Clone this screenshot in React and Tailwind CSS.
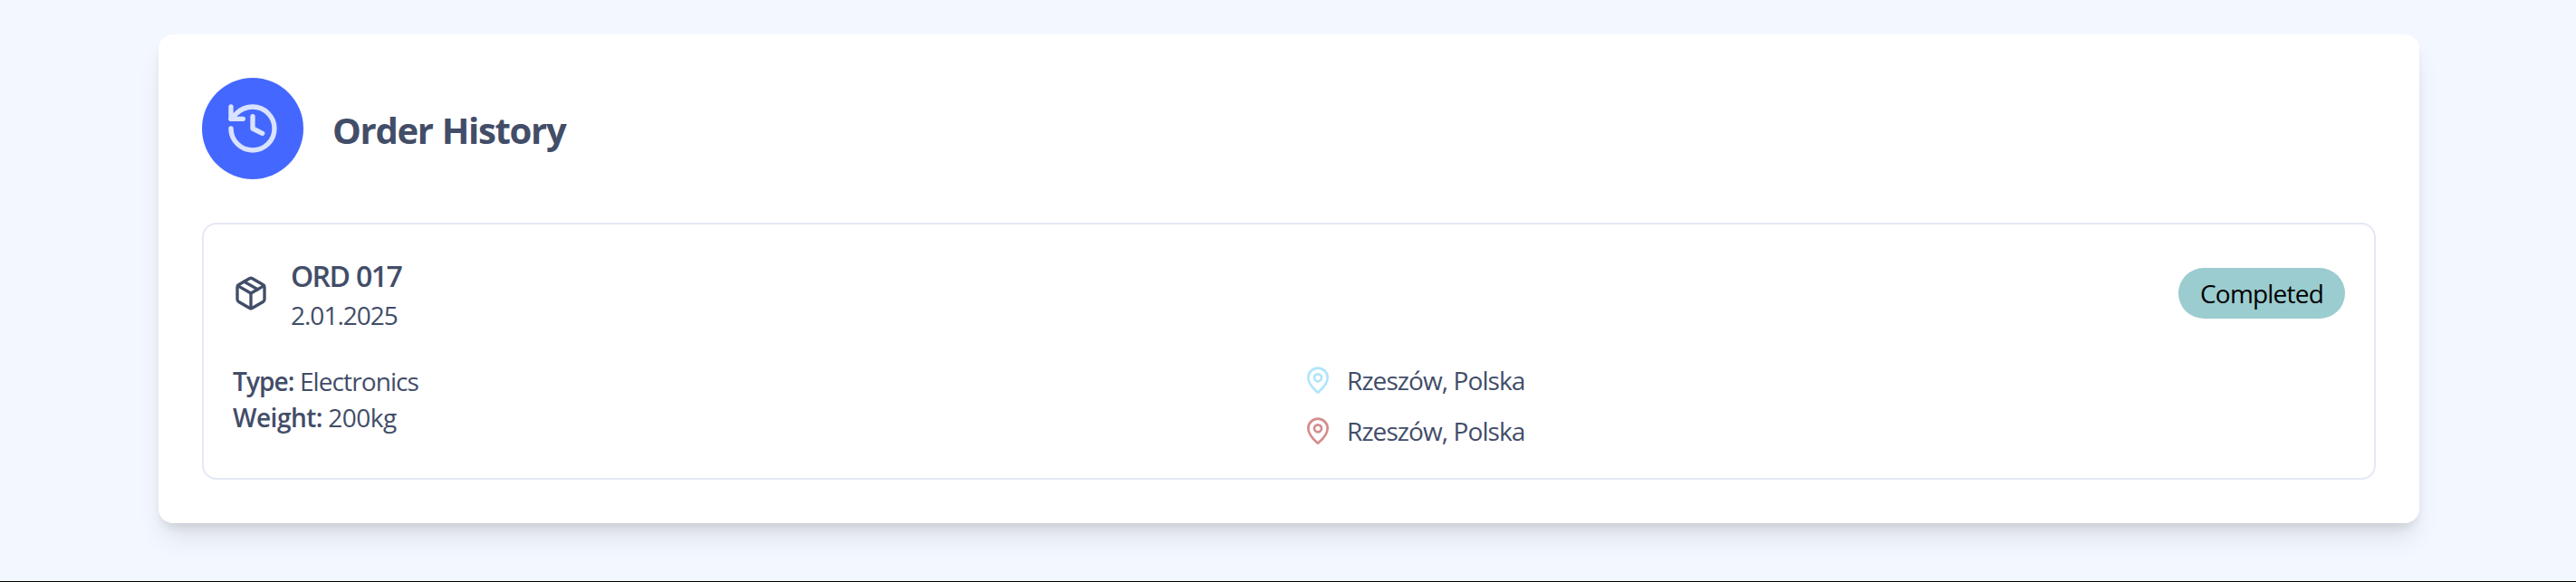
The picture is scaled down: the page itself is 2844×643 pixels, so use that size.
import { History, Package, MapPin } from "lucide-react";

const locations = [
  { city: "Rzeszów, Polska", color: "text-[#b0e5fa]" },
  { city: "Rzeszów, Polska", color: "text-[#d48c8c]" },
];

function Header() {
  return (
    <header className="flex items-center gap-8">
      <div className="flex size-28 items-center justify-center rounded-full bg-[#4468ff] text-[#d9e3ff]">
        <History className="size-16" strokeWidth={2} />
      </div>
      <h1 className="pt-[3px] text-[40px] leading-[56px] font-bold tracking-[-1.3px] [word-spacing:1px]">Order History</h1>
    </header>
  );
}

function OrderCard() {
  return (
    <article className="mt-12 rounded-2xl border-2 border-[#e4e8f5] p-8">
      <div className="flex items-center justify-between">
        <div className="flex items-center gap-6">
          <Package className="size-10" strokeWidth={2} />
          <div>
            <h2 className="h-12 pt-px text-[32px] leading-[48px] font-semibold tracking-[-1.6px] [word-spacing:1px]">ORD 017</h2>
            <p className="text-[28px] leading-10 tracking-[-1px]">2.01.2025</p>
          </div>
        </div>
        <span className="flex h-14 w-[184px] items-center justify-center rounded-full bg-[#9bcccf] text-[28px] leading-10 tracking-[-0.8px] text-black">
          Completed
        </span>
      </div>
      <div className="mt-8 grid grid-cols-2 gap-8 text-[28px] leading-10 tracking-[-0.9px]">
        <div className="pt-px">
          <p><span className="font-semibold tracking-[-0.9px]">Type:</span> Electronics</p>
          <p><span className="font-semibold tracking-[-0.5px]">Weight:</span> <span className="tracking-[-0.5px]">200kg</span></p>
        </div>
        <div className="flex flex-col gap-4">
          {locations.map(({ city, color }, i) => (
            <div key={i} className="flex items-center gap-4">
              <MapPin className={`size-8 ${color}`} strokeWidth={2} />
              <span>{city}</span>
            </div>
          ))}
        </div>
      </div>
    </article>
  );
}

export default function App() {
  return (
    <main className="h-[643px] overflow-hidden border-b border-black bg-[#f3f7ff] pt-[38px] pl-[175px] font-['Open_Sans','Noto_Sans',sans-serif] text-[#424d68]">
      <section className="w-[2496px] rounded-2xl bg-white p-12 shadow-[0_20px_30px_-6px_rgba(0,0,0,0.1),0_8px_12px_-4px_rgba(0,0,0,0.1)]">
        <Header />
        <OrderCard />
      </section>
    </main>
  );
}
